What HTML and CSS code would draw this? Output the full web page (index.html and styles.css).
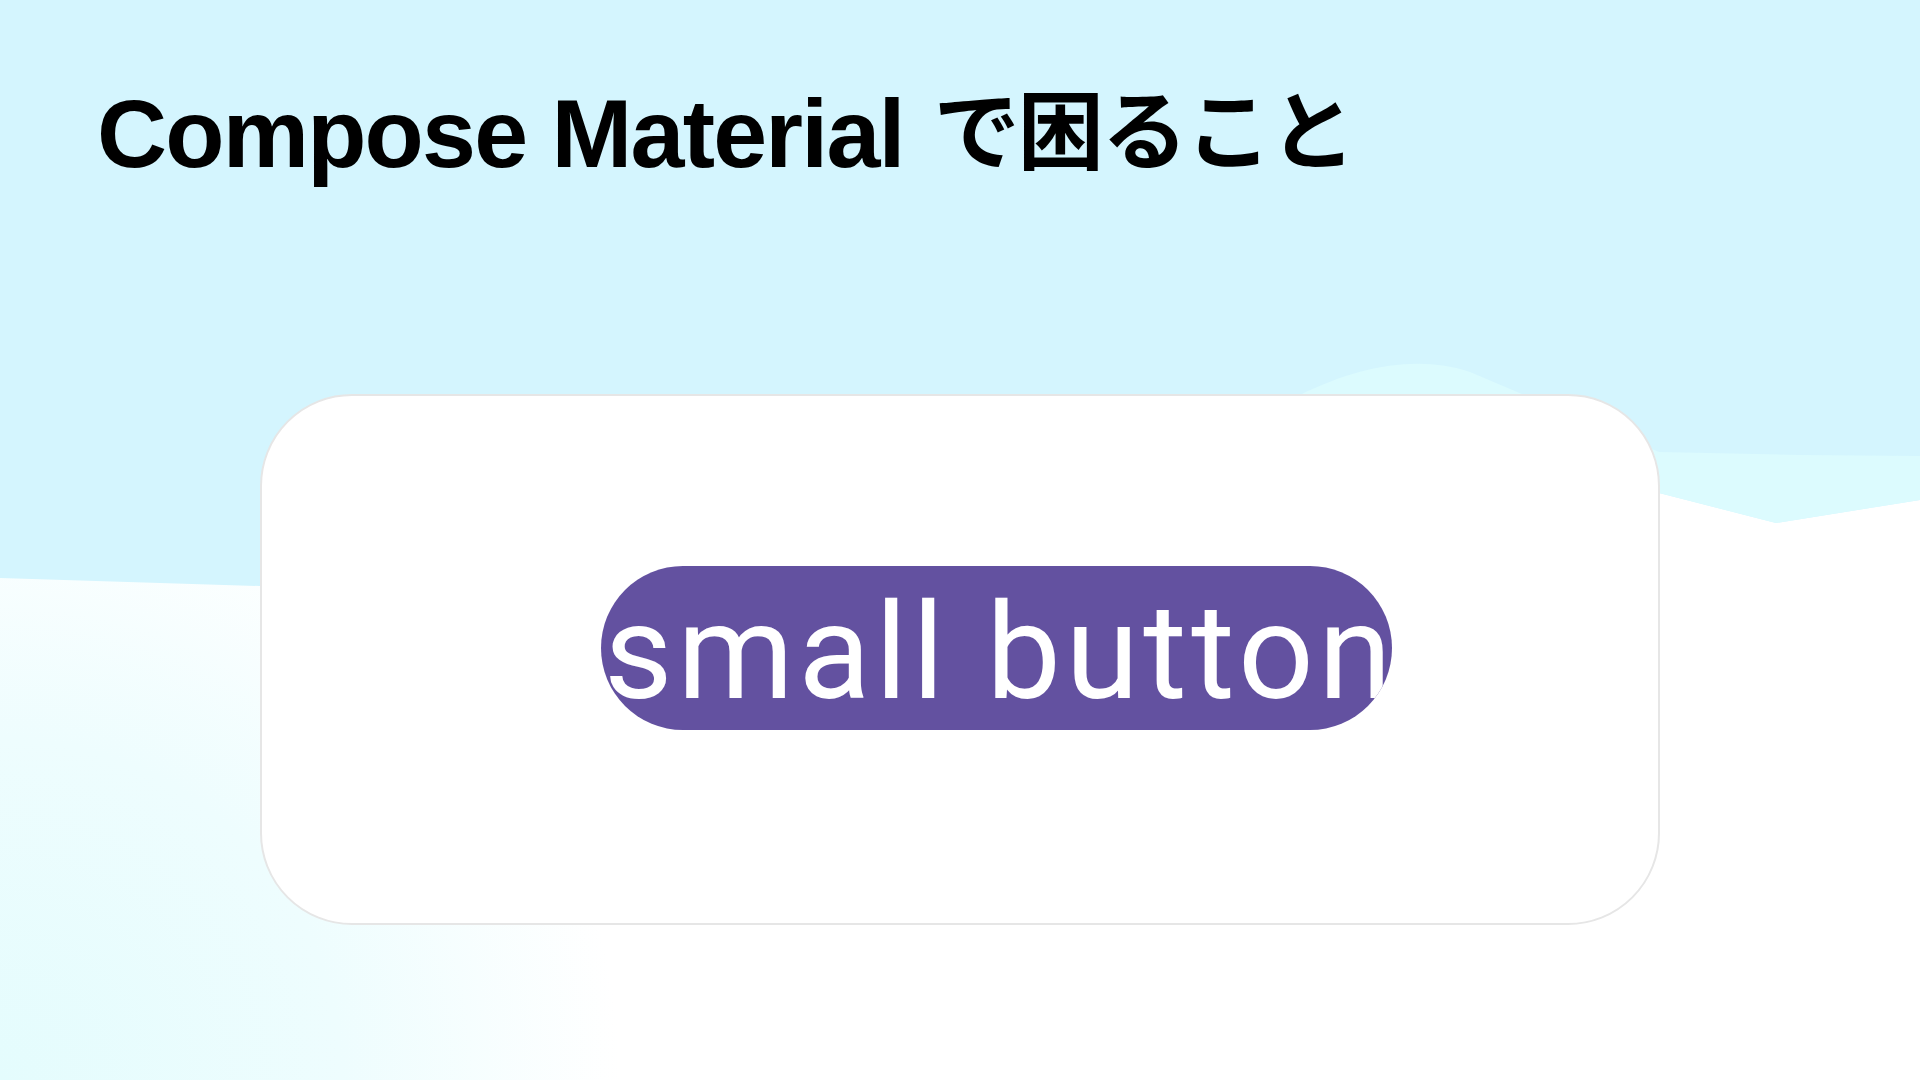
FILE: index.html
```html
<!DOCTYPE html>
<html lang="ja">
<head>
<meta charset="utf-8">
<title>Compose Material で困ること</title>
<link rel="stylesheet" href="styles.css">
</head>
<body>
<div class="slide">
  <svg class="bg" width="1920" height="1080" viewBox="0 0 1920 1080" aria-hidden="true">
    <defs>
      <radialGradient id="glow" cx="0" cy="1080" r="620" gradientUnits="userSpaceOnUse">
        <stop offset="0" stop-color="#e4fcfd"/>
        <stop offset="0.55" stop-color="#eefdfe"/>
        <stop offset="1" stop-color="#ffffff"/>
      </radialGradient>
    </defs>
    <rect x="0" y="0" width="1920" height="1080" fill="url(#glow)"/>
    <path d="M0 0 H1920 V500 L1776 523 L1659 493 L1400 500 L900 560 L600 586 L260 586 L0 578 Z" fill="#d4f5fe"/>
    <path d="M1300 395 C1360 365 1420 355 1470 372 L1560 410 L1659 452 L1800 455 L1920 456 V500 L1776 523 L1659 493 L1300 420 Z" fill="#dcfbfe"/>
  </svg>
  <h1 class="title">Compose Material <span class="ja">で困ること</span></h1>
  <div class="card">
    <div class="m3-button"><span class="label">small button</span></div>
  </div>
</div>
</body>
</html>
```

FILE: styles.css
```css
html, body {
  margin: 0;
  padding: 0;
}

body {
  width: 1920px;
  height: 1080px;
  overflow: hidden;
  background: #ffffff;
}

.slide {
  position: relative;
  width: 1920px;
  height: 1080px;
  padding-top: 76px;
  box-sizing: border-box;
}

.bg {
  position: absolute;
  left: 0;
  top: 0;
  z-index: 0;
}

.title {
  position: relative;
  z-index: 1;
  margin: 0;
  padding-left: 97px;
  height: 100px;
  font-family: "Liberation Sans", "Noto Sans CJK JP", sans-serif;
  font-weight: 700;
  font-size: 97px;
  line-height: 100px;
  letter-spacing: -1.8px;
  color: #000000;
  white-space: nowrap;
}

.title .ja {
  font-family: "Noto Sans CJK JP", sans-serif;
  font-size: 86px;
  letter-spacing: -2px;
  margin-left: 5px;
  vertical-align: 4px;
}

.card {
  position: relative;
  z-index: 1;
  width: 1400px;
  height: 531px;
  margin: 218px auto 0;
  box-sizing: border-box;
  border: 2px solid #e6e6e6;
  border-radius: 92px;
  background: #ffffff;
  padding: 170px 0 0 339px;
  display: flex;
  align-items: flex-start;
}

.m3-button {
  width: 791px;
  height: 164px;
  border-radius: 82px;
  background: #6351a0;
  overflow: hidden;
  box-sizing: border-box;
  padding: 20px 0 0 3px;
  white-space: nowrap;
}

.label {
  display: block;
  font-family: Roboto, "Noto Sans", sans-serif;
  font-size: 133px;
  line-height: 133px;
  letter-spacing: 4.5px;
  color: #ffffff;
}
```
